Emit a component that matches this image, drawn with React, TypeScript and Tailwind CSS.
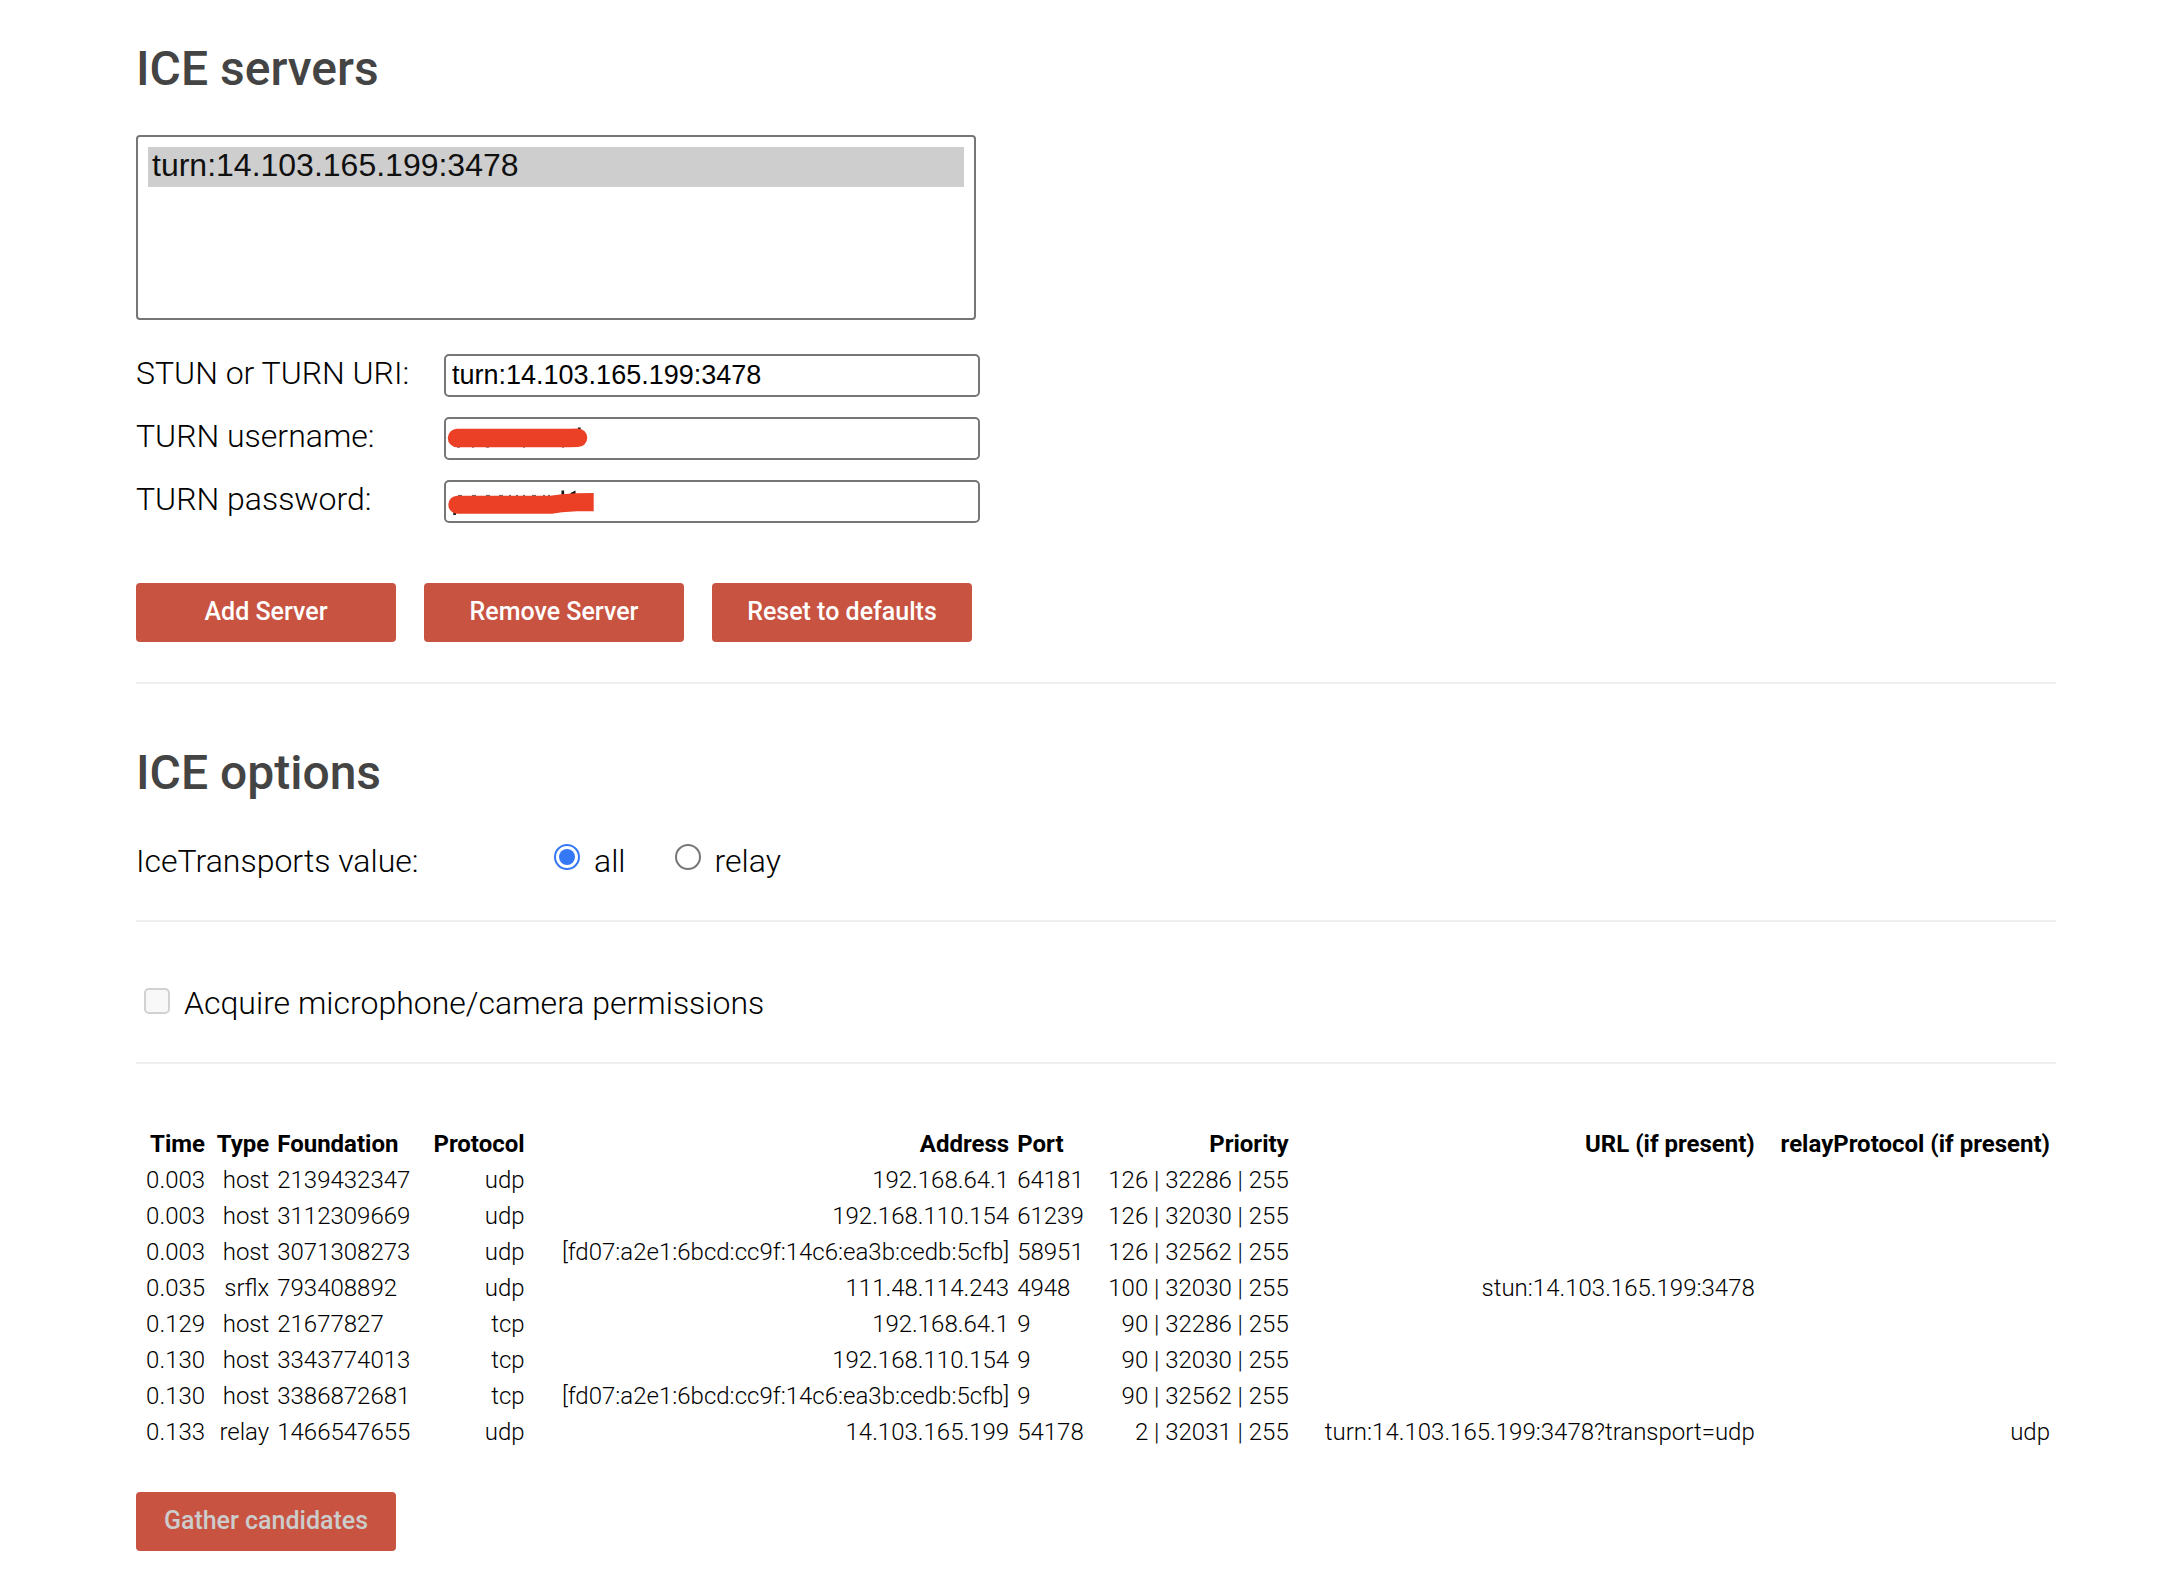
import { useState } from "react";

type Candidate = [string, string, string, string, string, string, string, string, string];

const candidates: Candidate[] = [
  ["0.003", "host", "2139432347", "udp", "192.168.64.1", "64181", "126 | 32286 | 255", "", ""],
  ["0.003", "host", "3112309669", "udp", "192.168.110.154", "61239", "126 | 32030 | 255", "", ""],
  ["0.003", "host", "3071308273", "udp", "[fd07:a2e1:6bcd:cc9f:14c6:ea3b:cedb:5cfb]", "58951", "126 | 32562 | 255", "", ""],
  ["0.035", "srflx", "793408892", "udp", "111.48.114.243", "4948", "100 | 32030 | 255", "stun:14.103.165.199:3478", ""],
  ["0.129", "host", "21677827", "tcp", "192.168.64.1", "9", "90 | 32286 | 255", "", ""],
  ["0.130", "host", "3343774013", "tcp", "192.168.110.154", "9", "90 | 32030 | 255", "", ""],
  ["0.130", "host", "3386872681", "tcp", "[fd07:a2e1:6bcd:cc9f:14c6:ea3b:cedb:5cfb]", "9", "90 | 32562 | 255", "", ""],
  ["0.133", "relay", "1466547655", "udp", "14.103.165.199", "54178", "2 | 32031 | 255", "turn:14.103.165.199:3478?transport=udp", "udp"],
];

const columns = [
  "Time",
  "Type",
  "Foundation",
  "Protocol",
  "Address",
  "Port",
  "Priority",
  "URL (if present)",
  "relayProtocol (if present)",
];

const leftAligned = new Set(["Foundation", "Port"]);

const labelClass = "w-[308px] pb-[6px] leading-[36px]";

const fieldClass =
  "h-[43px] w-[536px] rounded-[5px] border-2 border-[#767676] bg-white px-[6px] font-['Liberation_Sans',Arial,sans-serif] text-[27px] leading-[32px] font-normal text-black outline-none";

const buttonClass =
  "h-[59px] w-[260px] rounded-[4px] bg-[#c85341] pb-px text-[25px] leading-[32px] font-medium text-white disabled:text-[#cccccc]";

const radioClass =
  "size-[26px] shrink-0 appearance-none rounded-full border-2 border-[#767676] bg-white p-[3px] before:block before:size-full before:rounded-full checked:border-[#3478f6] checked:before:bg-[#3478f6]";

export default function App() {
  const [transport, setTransport] = useState("all");
  const [uri, setUri] = useState("turn:14.103.165.199:3478");

  return (
    <main className="min-h-screen bg-white pt-[41px] pr-[108px] pl-[136px] font-[Roboto,sans-serif] text-[32px] leading-[42px] font-light text-black">
      <section className="border-b-2 border-[#eeeeee] pb-[40px]">
        <h2 className="text-[48px] leading-[56px] font-medium text-[#444444]">ICE servers</h2>
        <select
          size={4}
          aria-label="ICE servers"
          defaultValue="turn"
          className="mt-[38px] block h-[185px] w-[840px] overflow-hidden rounded-[4px] border-2 border-[#767676] bg-white p-[10px] font-['Liberation_Sans',Arial,sans-serif] text-[32px] leading-[40px] font-normal outline-none"
        >
          <option value="turn" className="h-[40px] bg-[#cecece] px-[4px] py-0 text-[#101010]">
            turn:14.103.165.199:3478
          </option>
        </select>

        <div className="mt-[34px] flex flex-col gap-[20px]">
          <div className="flex items-center">
            <label htmlFor="uri" className={labelClass}>STUN or TURN URI:</label>
            <input id="uri" className={fieldClass} value={uri} onChange={(e) => setUri(e.target.value)} />
          </div>
          <div className="flex items-center">
            <label htmlFor="username" className={labelClass}>TURN username:</label>
            <div className="relative flex">
              <input id="username" className={fieldClass} />
              <svg className="pointer-events-none absolute top-0 left-0" width="160" height="43" viewBox="0 0 160 43" aria-hidden="true">
                <path d="M134 10.500h2.600v3h-2.600z" fill="#111111" />
                <path d="M13 30.400h3M28 30.400h2M42 30.400h3M79 30.400h2M118 30.400h2" stroke="#888888" strokeWidth="1" />
                <path d="M13 21H126L134 20.800" fill="none" stroke="#eb4026" strokeWidth="18.500" strokeLinecap="round" />
              </svg>
            </div>
          </div>
          <div className="flex items-center">
            <label htmlFor="password" className={labelClass}>TURN password:</label>
            <div className="relative flex">
              <input id="password" type="password" className={fieldClass} />
              <svg className="pointer-events-none absolute top-0 left-0" width="160" height="43" viewBox="0 0 160 43" aria-hidden="true">
                <path d="M117.500 10.500h2.600v6h-2.600zM131.500 10.500v4h-5v-1.500zM9.300 32h2.600v3h-2.600z" fill="#111111" />
                <path d="M14 15.400h4M28 15.400h4M42 15.400h4M55 15.400h4M65 15.400h2M72 15.400h2M79 15.400h2M88 15.400h4M99 15.400h2M104 15.400h2" stroke="#555555" strokeWidth="1" />
                <path d="M13.300 15.700H106L118 14.300L132 13.300L149.700 13V31.300H133L118 32.300L108 33.700H13.300A9 9 0 0 1 13.300 15.700Z" fill="#eb4026" />
              </svg>
            </div>
          </div>
        </div>

        <div className="mt-[60px] flex gap-[28px]">
          <button type="button" className={buttonClass}>Add Server</button>
          <button type="button" className={buttonClass}>Remove Server</button>
          <button type="button" className={buttonClass}>Reset to defaults</button>
        </div>
      </section>

      <section className="border-b-2 border-[#eeeeee] pt-[61px] pb-[38px]">
        <h2 className="text-[48px] leading-[56px] font-medium text-[#444444]">ICE options</h2>
        <div className="mt-[39px] flex items-start">
          <span id="transports" className="w-[418px]">IceTransports value:</span>
          <div role="radiogroup" aria-labelledby="transports" className="flex gap-[49px]">
            {["all", "relay"].map((value) => (
              <label key={value} className="flex items-start gap-[14px]">
                <span className="flex pt-[4px]">
                  <input
                    type="radio"
                    name="transports"
                    value={value}
                    checked={transport === value}
                    onChange={() => setTransport(value)}
                    className={radioClass}
                  />
                </span>
                {value}
              </label>
            ))}
          </div>
        </div>
      </section>

      <section className="border-b-2 border-[#eeeeee] pt-[60px] pb-[38px]">
        <label className="flex items-start gap-[14px] pl-[8px]">
          <span className="flex pt-[6px]">
            <input
              type="checkbox"
              disabled
              className="size-[26px] appearance-none rounded-[5px] border-2 border-[#d1d1d1] bg-[#f8f8f8]"
            />
          </span>
          Acquire microphone/camera permissions
        </label>
      </section>

      <section className="pt-[60px] pb-[20px]">
        <table className="w-full border-separate border-spacing-[4px] text-[24px] leading-[28px]">
          <thead>
            <tr>
              {columns.map((name) => (
                <th
                  key={name}
                  scope="col"
                  className={`p-[2px] font-bold whitespace-nowrap ${leftAligned.has(name) ? "text-left" : "text-right"}`}
                >
                  {name}
                </th>
              ))}
            </tr>
          </thead>
          <tbody>
            {candidates.map((row, i) => (
              <tr key={i}>
                {row.map((cell, j) => (
                  <td
                    key={columns[j]}
                    className={`p-[2px] whitespace-nowrap ${leftAligned.has(columns[j]) ? "text-left" : "text-right"}`}
                  >
                    {cell}
                  </td>
                ))}
              </tr>
            ))}
          </tbody>
        </table>
        <button type="button" disabled className={`mt-[40px] ${buttonClass}`}>
          Gather candidates
        </button>
      </section>
    </main>
  );
}
